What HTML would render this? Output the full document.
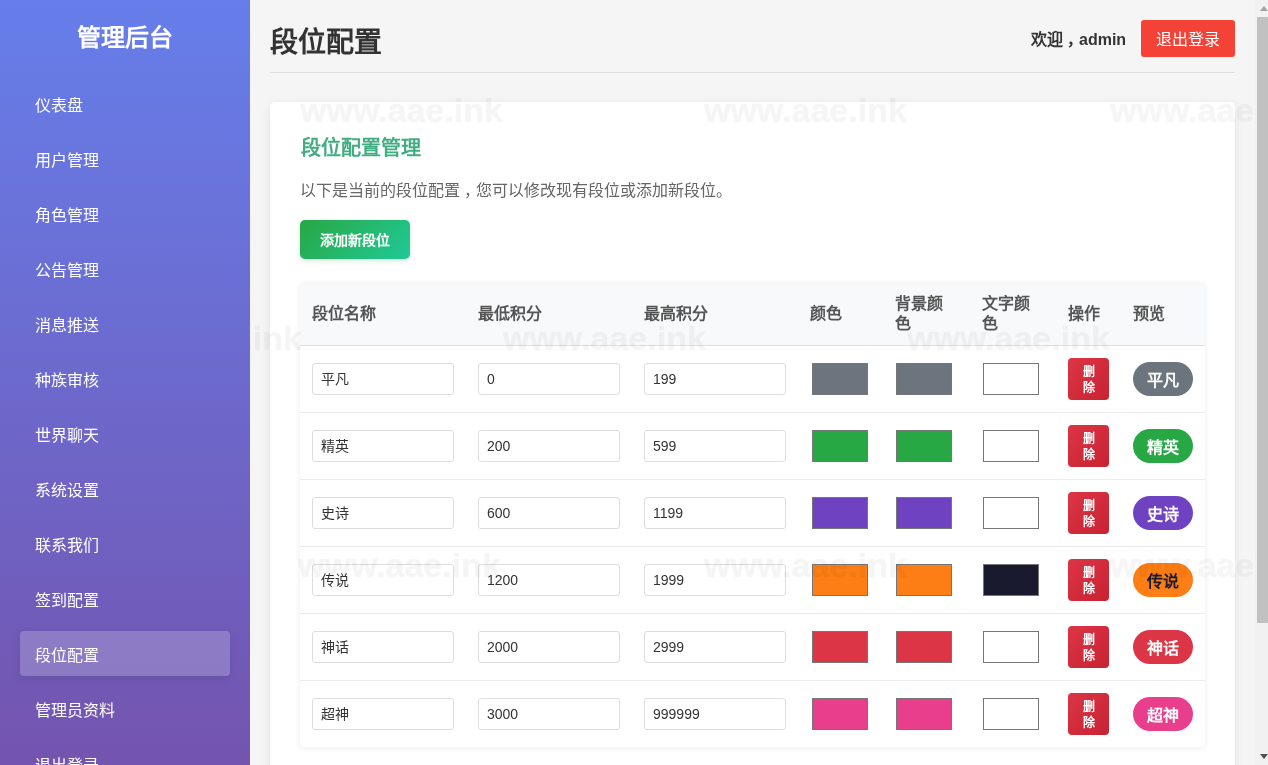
<!DOCTYPE html>
<html lang="zh-CN">
<head>
<meta charset="utf-8">
<style>
*{box-sizing:border-box;margin:0;padding:0}
html,body{width:1268px;height:765px;overflow:hidden}
body{font-family:"Liberation Sans",sans-serif;background:#f5f5f5;position:relative;color:#333}
.sb{position:absolute;left:0;top:0;width:250px;height:765px;background:linear-gradient(180deg,#667eea 0px,#764ba2 930px);z-index:5;overflow:hidden}
.sb h2{position:absolute;left:0;top:23px;width:250px;text-align:center;color:#fff;font-size:24px;font-weight:bold;line-height:30px}
.nav{position:absolute;left:20px;width:210px;height:45px;border-radius:5px;color:#fff;font-size:16px;line-height:45px;padding-left:15px}
.nav span{position:relative;top:2px}
.nav.act{background:rgba(255,255,255,.2);border-radius:4px;box-shadow:0 2px 8px rgba(0,0,0,.1)}
.hd-title{position:absolute;left:270px;top:25px;font-size:28px;font-weight:bold;color:#333;line-height:36px}
.hd-line{position:absolute;left:270px;top:72px;width:965px;height:1px;background:#e0e0e0}
.welcome{position:absolute;left:1031px;top:30px;font-size:16px;font-weight:bold;color:#333;line-height:20px}
.logout{position:absolute;left:1141px;top:20px;width:94px;height:37px;background:#f44336;color:#fff;border-radius:3px;font-size:16px;line-height:39px;text-align:center}
.card{position:absolute;left:270px;top:102px;width:965px;height:700px;background:#fff;border-radius:5px;box-shadow:0 2px 10px rgba(0,0,0,.08)}
.h3{position:absolute;left:301px;top:136px;font-size:20px;font-weight:bold;color:#43ad82;line-height:24px}
.desc{position:absolute;left:300px;top:181px;font-size:16px;color:#666;line-height:20px}
.add{position:absolute;left:300px;top:220px;width:110px;height:39px;border-radius:5px;background:linear-gradient(135deg,#28a745,#20c997);color:#fff;font-size:14px;font-weight:bold;line-height:41px;text-align:center;box-shadow:0 2px 5px rgba(40,167,69,.2)}
.tbl{position:absolute;left:300px;top:283px;width:905px;height:464px;background:#fff;border-radius:4px;box-shadow:0 1px 6px rgba(0,0,0,.08);overflow:hidden}
.th{position:absolute;top:0;left:0;width:905px;height:63px;background:#f8f9fa;border-bottom:1px solid #dee2e6}
.thc{position:absolute;font-size:16px;font-weight:bold;color:#555;line-height:20px}
.row{position:absolute;left:0;width:905px;height:67px;border-bottom:1px solid #e9ecef}
.inp{position:absolute;top:17px;width:142px;height:32px;border:1px solid #ddd;border-radius:3px;font-size:14px;color:#333;line-height:30px;padding-left:8px;background:#fff}
.sw{position:absolute;top:17px;width:56px;height:32px;border:1px solid #767676}
.del{position:absolute;left:768px;top:12px;width:41px;height:42px;border-radius:4px;background:linear-gradient(135deg,#dc3545,#c82333);color:#fff;font-size:12px;font-weight:bold;line-height:16px;text-align:center;padding-top:6px}
.badge{position:absolute;left:833px;top:16px;width:60px;height:34px;border-radius:17px;color:#fff;font-size:16px;font-weight:bold;line-height:37px;text-align:center}
.wm{position:absolute;font-size:34px;font-weight:bold;color:#000;opacity:.035;-webkit-text-stroke:0.6px #000;line-height:40px;z-index:3;white-space:nowrap}
.scr{position:absolute;left:1255px;top:0;width:13px;height:765px;background:#f1f1f1;z-index:10}
.up{position:absolute;left:4.5px;top:6px;width:0;height:0;border-left:4px solid transparent;border-right:4px solid transparent;border-bottom:5px solid #a3a3a3}
.dn{position:absolute;left:4.5px;top:753.5px;width:0;height:0;border-left:4px solid transparent;border-right:4px solid transparent;border-top:5px solid #505050}
.thumb{position:absolute;left:2px;top:17px;width:11px;height:606px;background:#c1c1c1}
</style>
</head>
<body><div style="position:absolute;left:0;top:0;width:1268px;height:765px;will-change:transform">
<div class="sb">
  <h2>管理后台</h2>
  <div class="nav" style="top:81px"><span>仪表盘</span></div>
  <div class="nav" style="top:136px"><span>用户管理</span></div>
  <div class="nav" style="top:191px"><span>角色管理</span></div>
  <div class="nav" style="top:246px"><span>公告管理</span></div>
  <div class="nav" style="top:301px"><span>消息推送</span></div>
  <div class="nav" style="top:356px"><span>种族审核</span></div>
  <div class="nav" style="top:411px"><span>世界聊天</span></div>
  <div class="nav" style="top:466px"><span>系统设置</span></div>
  <div class="nav" style="top:521px"><span>联系我们</span></div>
  <div class="nav" style="top:576px"><span>签到配置</span></div>
  <div class="nav act" style="top:631px"><span>段位配置</span></div>
  <div class="nav" style="top:686px"><span>管理员资料</span></div>
  <div class="nav" style="top:741px"><span>退出登录</span></div>
</div>

<div class="hd-title">段位配置</div>
<div class="hd-line"></div>
<div class="welcome">欢迎<span style="position:relative;left:4px">，</span>admin</div>
<div class="logout">退出登录</div>

<div class="card"></div>
<div class="h3">段位配置管理</div>
<div class="desc">以下是当前的段位配置<span style="position:relative;left:4px">，</span>您可以修改现有段位或添加新段位。</div>
<div class="add">添加新段位</div>

<div class="tbl">
  <div class="th">
    <div class="thc" style="left:12px;top:21px">段位名称</div>
    <div class="thc" style="left:178px;top:21px">最低积分</div>
    <div class="thc" style="left:344px;top:21px">最高积分</div>
    <div class="thc" style="left:510px;top:21px">颜色</div>
    <div class="thc" style="left:595px;top:11px;width:60px">背景颜色</div>
    <div class="thc" style="left:682px;top:11px;width:60px">文字颜色</div>
    <div class="thc" style="left:768px;top:21px">操作</div>
    <div class="thc" style="left:833px;top:21px">预览</div>
  </div>
  <div id="rows">
  <div class="row" style="top:63px">
    <div class="inp" style="left:12px">平凡</div>
    <div class="inp" style="left:178px">0</div>
    <div class="inp" style="left:344px">199</div>
    <div class="sw" style="left:512px;background:#6c757d"></div>
    <div class="sw" style="left:596px;background:#6c757d"></div>
    <div class="sw" style="left:683px;background:#ffffff"></div>
    <div class="del">删<br>除</div>
    <div class="badge" style="background:#6c757d;color:#ffffff">平凡</div>
  </div>
  <div class="row" style="top:130px">
    <div class="inp" style="left:12px">精英</div>
    <div class="inp" style="left:178px">200</div>
    <div class="inp" style="left:344px">599</div>
    <div class="sw" style="left:512px;background:#28a745"></div>
    <div class="sw" style="left:596px;background:#28a745"></div>
    <div class="sw" style="left:683px;background:#ffffff"></div>
    <div class="del">删<br>除</div>
    <div class="badge" style="background:#28a745;color:#ffffff">精英</div>
  </div>
  <div class="row" style="top:197px">
    <div class="inp" style="left:12px">史诗</div>
    <div class="inp" style="left:178px">600</div>
    <div class="inp" style="left:344px">1199</div>
    <div class="sw" style="left:512px;background:#6f42c1"></div>
    <div class="sw" style="left:596px;background:#6f42c1"></div>
    <div class="sw" style="left:683px;background:#ffffff"></div>
    <div class="del">删<br>除</div>
    <div class="badge" style="background:#6f42c1;color:#ffffff">史诗</div>
  </div>
  <div class="row" style="top:264px">
    <div class="inp" style="left:12px">传说</div>
    <div class="inp" style="left:178px">1200</div>
    <div class="inp" style="left:344px">1999</div>
    <div class="sw" style="left:512px;background:#fd7e14"></div>
    <div class="sw" style="left:596px;background:#fd7e14"></div>
    <div class="sw" style="left:683px;background:#1a1a2e"></div>
    <div class="del">删<br>除</div>
    <div class="badge" style="background:#fd7e14;color:#1a1a2e">传说</div>
  </div>
  <div class="row" style="top:331px">
    <div class="inp" style="left:12px">神话</div>
    <div class="inp" style="left:178px">2000</div>
    <div class="inp" style="left:344px">2999</div>
    <div class="sw" style="left:512px;background:#dc3545"></div>
    <div class="sw" style="left:596px;background:#dc3545"></div>
    <div class="sw" style="left:683px;background:#ffffff"></div>
    <div class="del">删<br>除</div>
    <div class="badge" style="background:#dc3545;color:#ffffff">神话</div>
  </div>
  <div class="row" style="top:398px">
    <div class="inp" style="left:12px">超神</div>
    <div class="inp" style="left:178px">3000</div>
    <div class="inp" style="left:344px">999999</div>
    <div class="sw" style="left:512px;background:#e83e8c"></div>
    <div class="sw" style="left:596px;background:#e83e8c"></div>
    <div class="sw" style="left:683px;background:#ffffff"></div>
    <div class="del">删<br>除</div>
    <div class="badge" style="background:#e83e8c;color:#ffffff">超神</div>
  </div>
</div><!--rows-->
</div>

<!--wm-->
<div class="wm" style="left:300px;top:90px">www.aae.ink</div>
<div class="wm" style="left:704px;top:90px">www.aae.ink</div>
<div class="wm" style="left:1110px;top:90px">www.aae.ink</div>
<div class="wm" style="left:99px;top:318px">www.aae.ink</div>
<div class="wm" style="left:503px;top:318px">www.aae.ink</div>
<div class="wm" style="left:907px;top:318px">www.aae.ink</div>
<div class="wm" style="left:298px;top:545px">www.aae.ink</div>
<div class="wm" style="left:704px;top:545px">www.aae.ink</div>
<div class="wm" style="left:1110px;top:545px">www.aae.ink</div>
<!--/wm-->

<div class="scr"><div class="thumb"></div><div class="up"></div><div class="dn"></div></div>
</div></body>
</html>
